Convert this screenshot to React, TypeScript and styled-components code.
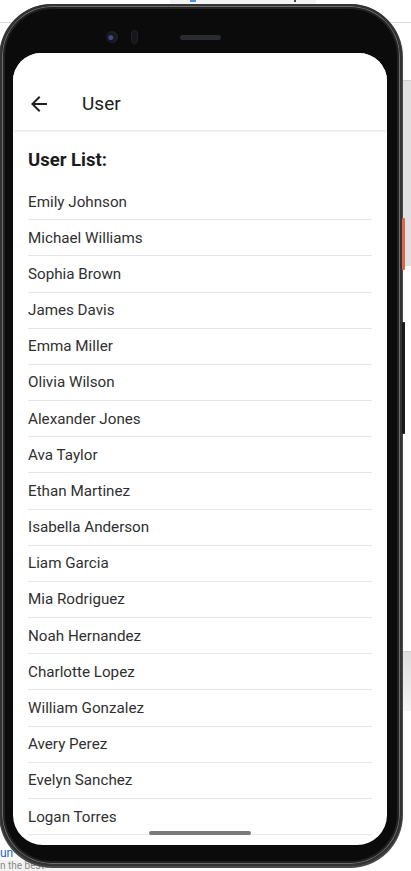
import React from "react";
import styled, { createGlobalStyle } from "styled-components";

const GlobalStyle = createGlobalStyle`
  html, body { margin: 0; padding: 0; background: #ffffff; }
  body { font-family: Roboto, "Noto Sans", "Liberation Sans", sans-serif; }
  * { box-sizing: border-box; }
`;

const Page = styled.div`
  position: relative;
  width: 411px;
  height: 871px;
  overflow: hidden;
  background: #ffffff;
  display: flex;
  flex-direction: column;
`;

/* ---- web page behind the phone ---- */
const TopTab = styled.div`
  margin-left: 170px;
  width: 146px;
  height: 4px;
  background: #f2f2f2;
  display: flex;
  justify-content: space-between;
  padding: 0 20px;
`;
const TabMark = styled.span<{ $c: string; $w: number }>`
  width: ${(p) => p.$w}px;
  height: 2px;
  background: ${(p) => p.$c};
`;
const Rule = styled.div<{ $top: number }>`
  margin-top: ${(p) => p.$top}px;
  height: 1px;
  background: #dcdcdc;
`;
const SidePanel = styled.div<{ $top: number; $h: number; $grad?: boolean }>`
  margin-top: ${(p) => p.$top}px;
  margin-left: auto;
  width: 16px;
  height: ${(p) => p.$h}px;
  border-top: 1px solid #cfcfcf;
  background: ${(p) =>
    p.$grad ? "linear-gradient(#dedede, #f4f4f4)" : "#e1e1e1"};
`;
const BackLink = styled.div`
  margin-top: auto;
  font-size: 12px;
  line-height: 14px;
  color: #1a5fd0;
`;
const BackNote = styled.div`
  font-size: 10px;
  line-height: 11px;
  height: 11px;
  color: #8a8a8a;
  background: #f3f3f3;
  width: 120px;
`;

/* ---- phone ---- */
const Phone = styled.div`
  position: absolute;
  left: 0;
  top: 4px;
  width: 402px;
  height: 862px;
  border-radius: 52px;
  background: #0b0b0c;
  border: 2px solid #333333;
  box-shadow: inset 0 0 0 1px #6e6e6e, inset 0 0 0 3px #222222,
    0 1px 0 1px #4a4a4a;
  padding: 0 13px 19px 11px;
  display: flex;
  flex-direction: column;
`;
const SideButton = styled.div<{ $top: number; $h: number; $c: string }>`
  position: absolute;
  right: -5px;
  top: ${(p) => p.$top}px;
  width: 3px;
  height: ${(p) => p.$h}px;
  background: ${(p) => p.$c};
  border-radius: 1px;
`;
const Bezel = styled.div`
  height: 47px;
  flex: none;
  display: flex;
  align-items: flex-start;
  padding-left: 93px;
`;
const Camera = styled.div`
  margin-top: 25px;
  width: 12px;
  height: 12px;
  border-radius: 50%;
  background: radial-gradient(circle at 40% 55%, #3a4a8a 0 2px, #15161c 3px, #1e1f24 6px);
`;
const Sensor = styled.div`
  margin-top: 24px;
  margin-left: 13px;
  width: 7px;
  height: 14px;
  border-radius: 4px;
  background: #16171b;
  border: 1px solid #222328;
`;
const Speaker = styled.div`
  margin-top: 29px;
  margin-left: 42px;
  width: 41px;
  height: 5px;
  border-radius: 3px;
  background: #2a2b2f;
`;
const Screen = styled.div`
  position: relative;
  flex: 1;
  background: #ffffff;
  border-radius: 28px 28px 30px 30px;
  overflow: hidden;
  display: flex;
  flex-direction: column;
`;
const AppBar = styled.div`
  flex: none;
  height: 77px;
  padding: 24px 0 0 14px;
  display: flex;
  align-items: center;
  background: #ffffff;
  box-shadow: 0 1px 3px rgba(0, 0, 0, 0.13);
  position: relative;
  z-index: 1;
`;
const BackIcon = styled.svg`
  width: 24px;
  height: 24px;
  fill: #202020;
  flex: none;
`;
const Title = styled.div`
  margin-left: 31px;
  font-size: 19px;
  color: #202020;
`;
const Content = styled.div`
  flex: 1;
  padding: 20px 15px 0 15px;
  display: flex;
  flex-direction: column;
`;
const Heading = styled.div`
  font-size: 18.5px;
  line-height: 20px;
  font-weight: 700;
  color: #1b1b1b;
  margin-bottom: 14px;
`;
const List = styled.div`
  display: flex;
  flex-direction: column;
`;
const Item = styled.div`
  height: 36.18px;
  flex: none;
  display: flex;
  align-items: center;
  font-size: 15.2px;
  color: #303030;
  border-bottom: 1px solid #e6e6e6;
`;
const HomeBar = styled.div`
  position: absolute;
  left: 50%;
  bottom: 10px;
  width: 102px;
  height: 4px;
  margin-left: -51px;
  border-radius: 2px;
  background: #7a7a7a;
`;

const users = [
  "Emily Johnson",
  "Michael Williams",
  "Sophia Brown",
  "James Davis",
  "Emma Miller",
  "Olivia Wilson",
  "Alexander Jones",
  "Ava Taylor",
  "Ethan Martinez",
  "Isabella Anderson",
  "Liam Garcia",
  "Mia Rodriguez",
  "Noah Hernandez",
  "Charlotte Lopez",
  "William Gonzalez",
  "Avery Perez",
  "Evelyn Sanchez",
  "Logan Torres",
];

export default function App() {
  return (
    <>
      <GlobalStyle />
      <Page>
        <TopTab>
          <TabMark $c="#4a8cf0" $w={6} />
          <TabMark $c="#444" $w={2} />
        </TopTab>
        <Rule $top={18} />
        <SidePanel $top={57} $h={186} />
        <SidePanel $top={385} $h={60} $grad />
        <BackLink>un</BackLink>
        <BackNote>n the best</BackNote>

        <Phone>
          <SideButton $top={212} $h={52} $c="#e0664a" />
          <SideButton $top={316} $h={112} $c="#1a1a1a" />
          <Bezel>
            <Camera />
            <Sensor />
            <Speaker />
          </Bezel>
          <Screen>
            <AppBar>
              <BackIcon viewBox="0 0 24 24">
                <path d="M20 11H7.83l5.59-5.59L12 4l-8 8 8 8 1.41-1.41L7.83 13H20v-2z" />
              </BackIcon>
              <Title>User</Title>
            </AppBar>
            <Content>
              <Heading>User List:</Heading>
              <List>
                {users.map((u) => (
                  <Item key={u}>{u}</Item>
                ))}
              </List>
            </Content>
            <HomeBar />
          </Screen>
        </Phone>
      </Page>
    </>
  );
}
